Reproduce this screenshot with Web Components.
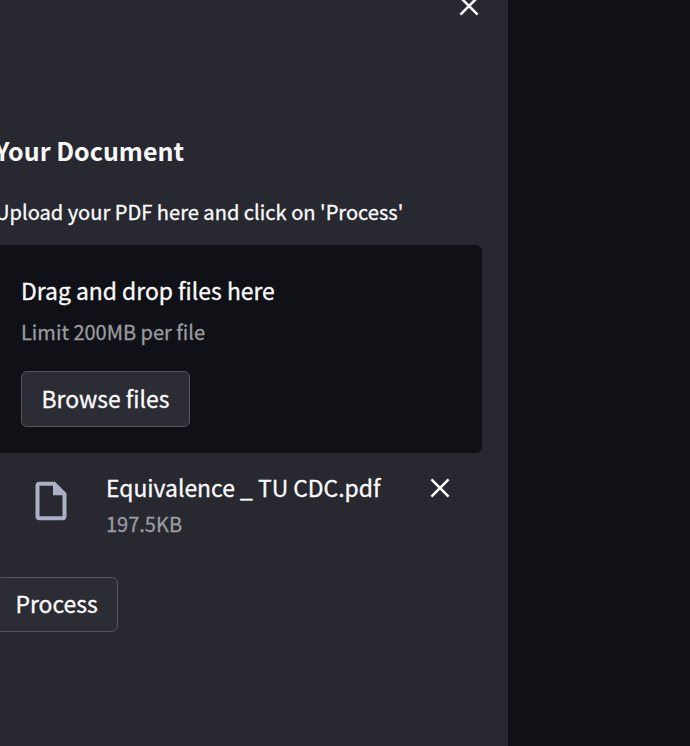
<!DOCTYPE html>
<html lang="en">
<head>
<meta charset="utf-8">
<title>Your Document</title>
<style>
html, body { margin: 0; height: 100%; overflow: hidden; background: #101116; }
body { font-family: "Noto Sans CJK JP", "Noto Sans CJK SC", sans-serif; color: #fafafa; -webkit-text-stroke: 0.3px; }
</style>
</head>
<body>
<side-panel>
  <close-icon slot="close"></close-icon>
  <panel-heading>Your Document</panel-heading>
  <field-label>Upload your PDF here and click on 'Process'</field-label>
  <drop-zone>
    <span slot="title">Drag and drop files here</span>
    <span slot="limit">Limit 200MB per file</span>
    <push-button>Browse files</push-button>
  </drop-zone>
  <file-row>
    <span slot="name">Equivalence _ TU CDC.pdf</span>
    <span slot="size">197.5KB</span>
  </file-row>
  <push-button class="process">Process</push-button>
</side-panel>
<script>
function define(name, html) {
  customElements.define(name, class extends HTMLElement {
    constructor() {
      super();
      this.attachShadow({ mode: "open" }).innerHTML = html;
    }
  });
}

define("close-icon", `
<style>
:host { display: block; width: 20px; height: 20px; }
svg { display: block; }
</style>
<svg width="20" height="20" viewBox="0 0 20 20" fill="none" stroke="#fafafa" stroke-width="2.6"><path d="M1.4 1.4 18.6 18.6M18.6 1.4 1.4 18.6"/></svg>`);

define("panel-heading", `
<style>
:host { display: block; height: 34px; line-height: 34px; font-size: 25px; font-weight: 700; white-space: nowrap; -webkit-text-stroke: 0; }
</style><slot></slot>`);

define("field-label", `
<style>
:host { display: block; height: 32px; margin-top: 29px; line-height: 32px; font-size: 20.08px; white-space: nowrap; }
</style><slot></slot>`);

define("push-button", `
<style>
:host { display: flex; box-sizing: border-box; width: fit-content; height: 56px; padding: 0 20px 2px 19.5px; align-items: center; border: 1px solid #54555d; border-radius: 6px; background: #2c2c35; font-size: 22.9px; line-height: 32px; white-space: nowrap; }
:host(.process) { height: 55px; margin-top: 37px; padding-right: 19px; padding-bottom: 3px; }
</style><slot></slot>`);

define("drop-zone", `
<style>
:host { display: block; box-sizing: border-box; height: 208px; margin-top: 17px; padding: 28px 26px 26px; border-radius: 6px; background: #101116; }
.title { height: 34px; line-height: 34px; font-size: 22.9px; }
.limit { height: 30px; line-height: 30px; margin: 10px 0 24px; font-size: 20px; color: #9a9b9e; }
</style>
<div class="title"><slot name="title"></slot></div>
<div class="limit"><slot name="limit"></slot></div>
<slot></slot>`);

define("file-row", `
<style>
:host { display: flex; height: 87px; padding: 0 32px 0 40px; box-sizing: border-box; }
.doc { display: block; margin-top: 28px; }
.text { margin-left: 39px; flex: 1; padding-top: 17px; white-space: nowrap; }
.name { height: 34px; line-height: 34px; font-size: 22.9px; }
.size { height: 30px; line-height: 30px; margin-top: 5px; font-size: 20px; color: #9a9b9e; }
close-icon { margin-top: 25px; }
</style>
<svg class="doc" width="32" height="40" viewBox="0 0 32 40"><path fill="#acb0c4" fill-rule="evenodd" d="M4.5.7H20L31.5 12.2V35.2Q31.5 39.2 27.5 39.2H4.5Q.5 39.2.5 35.2V4.7Q.5.7 4.5.7ZM4.5 4.7V35.2H27.5V14.2H18V4.7Z"/></svg>
<div class="text">
  <div class="name"><slot name="name"></slot></div>
  <div class="size"><slot name="size"></slot></div>
</div>
<close-icon></close-icon>`);

define("side-panel", `
<style>
:host { display: block; box-sizing: border-box; width: 508px; height: 746px; overflow: hidden; background: #282830; }
header { display: flex; justify-content: flex-end; height: 133px; padding-right: 29px; }
header ::slotted(close-icon) { margin-top: -4px; }
.body { display: flow-root; width: 487px; margin-left: -5px; }
</style>
<header><slot name="close"></slot></header>
<div class="body"><slot></slot></div>`);
</script>
</body>
</html>
